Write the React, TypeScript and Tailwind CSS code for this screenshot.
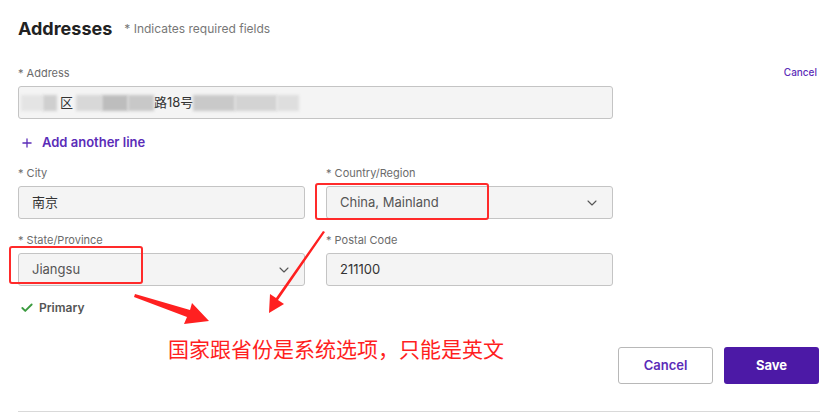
import { Check, ChevronDown, Plus } from 'lucide-react';

const font = { fontFamily: 'Inter, "Noto Sans CJK SC", sans-serif' };

function Label({ children }: { children: string }) {
    return <div className="text-[11px] leading-[14px] text-[#6b6b6b]">{children}</div>;
}

function Field({ label, value, select = false }: { label: string; value: string; select?: boolean }) {
    return (
        <div className="flex flex-col">
            <Label>{label}</Label>
            <div className="mt-[6px] flex h-[33px] items-center justify-between rounded-[3px] border border-[#c4c4c4] bg-[#f4f4f4] pl-[13px] pr-[12px]">
                <span className={`text-[13px] ${select ? 'text-[#555]' : 'text-[#333]'}`}>{value}</span>
                {select && <ChevronDown size={16} strokeWidth={1.6} className="text-[#555]" />}
            </div>
        </div>
    );
}

function Blur({ w, shade }: { w: number; shade: string }) {
    return <span className={`inline-block h-[16px] ${shade} blur-[1.5px]`} style={{ width: w }} />;
}

export default function App() {
    return (
        <div className="relative h-[416px] w-[834px] overflow-hidden bg-white" style={font}>
            <div className="w-[820px] pl-[18px] pt-[17px]">
                <div className="flex items-center gap-[12px]">
                    <h2 className="text-[18px] font-bold leading-[24px] text-[#222]">Addresses</h2>
                    <span className="text-[12px] text-[#777]">* Indicates required fields</span>
                </div>

                <div className="mt-[24px] flex items-center justify-between">
                    <Label>* Address</Label>
                    <span className="pr-[3px] text-[10px] font-medium text-[#5b2cb8]">Cancel</span>
                </div>
                <div className="mt-[6px] flex h-[33px] w-[595px] items-center rounded-[3px] border border-[#c4c4c4] bg-[#f4f4f4] pl-[2px] text-[13px] text-[#333]">
                    <Blur w={22} shade="bg-[#e4e4e4]" />
                    <Blur w={14} shade="bg-[#cfcfcf]" />
                    <span className="px-[3px]">区</span>
                    <Blur w={26} shade="bg-[#d8d8d8]" />
                    <Blur w={26} shade="bg-[#bdbdbd]" />
                    <Blur w={26} shade="bg-[#c8c8c8]" />
                    <span>路18号</span>
                    <Blur w={42} shade="bg-[#c9c9c9]" />
                    <Blur w={42} shade="bg-[#d3d3d3]" />
                    <Blur w={22} shade="bg-[#dedede]" />
                </div>

                <div className="mt-[15px] flex h-[18px] items-center gap-[8px] pl-[2px] text-[13px] font-semibold text-[#5b2cb8]">
                    <Plus size={14} strokeWidth={2.2} />
                    <span>Add another line</span>
                </div>

                <div className="mt-[14px] grid w-[595px] grid-cols-2 gap-x-[21px] gap-y-[14px]">
                    <Field label="* City" value="南京" />
                    <Field label="* Country/Region" value="China, Mainland" select />
                    <Field label="* State/Province" value="Jiangsu" select />
                    <Field label="* Postal Code" value="211100" />
                </div>

                <div className="mt-[14px] flex h-[16px] items-center gap-[5px] pl-[2px]">
                    <Check size={14} strokeWidth={3.2} className="text-[#3b9b3f]" />
                    <span className="text-[12px] font-semibold text-[#555]">Primary</span>
                </div>

                <div className="mt-[31px] flex justify-end gap-[11px] pr-px">
                    <button className="h-[37px] w-[95px] rounded-[3px] border border-[#b8b8b8] bg-white text-[13px] font-semibold text-[#5b2cb8]">
                        Cancel
                    </button>
                    <button className="h-[37px] w-[95px] rounded-[3px] bg-[#4c19a6] text-[13px] font-bold text-white">
                        Save
                    </button>
                </div>

                <div className="mt-[27px] h-px bg-[#d9d9d9]" />
            </div>

            {/* annotations */}
            <div className="absolute left-[315px] top-[183px] h-[37px] w-[174px] rounded-[3px] border-2 border-[#ff2a2a]" />
            <div className="absolute left-[9px] top-[246px] h-[38px] w-[134px] rounded-[3px] border-2 border-[#ff2a2a]" />
            <svg className="absolute left-0 top-0" width="834" height="416">
                <polygon points="135,294 190,310 192,303 209,321 184,324 187,317 134,297" fill="#ff2020" />
                <polygon points="325,232 278,300 284,304 269,313 270,294 276,298 323,231" fill="#ff2020" />
            </svg>
            <div
                className="absolute left-[168px] top-[334px] text-[21px] leading-[28px] text-[#ff1f1f]"
                style={{ fontFamily: '"Noto Sans CJK SC", sans-serif' }}
            >
                国家跟省份是系统选项，只能是英文
            </div>
        </div>
    );
}
